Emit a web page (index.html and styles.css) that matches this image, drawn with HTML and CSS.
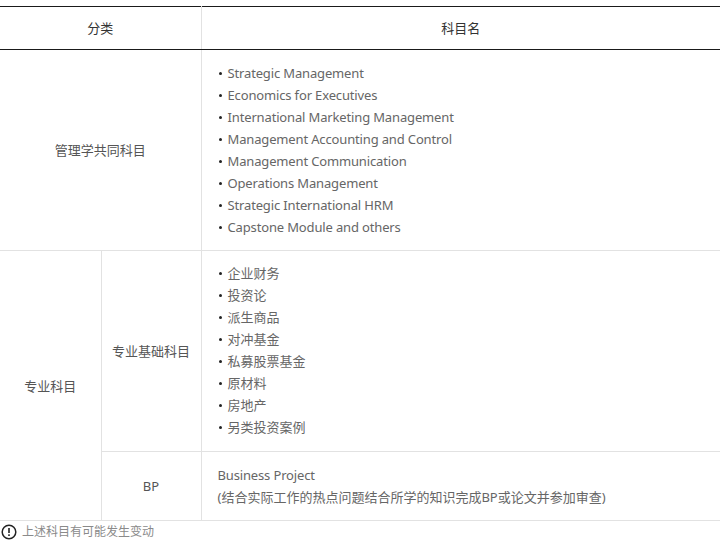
FILE: index.html
```html
<!DOCTYPE html>
<html lang="zh">
<head>
<meta charset="utf-8">
<title>科目</title>
<link rel="stylesheet" href="styles.css">
</head>
<body>
<div class="wrap">
  <table class="curri">
    <colgroup>
      <col class="c1"><col class="c2"><col class="c3">
    </colgroup>
    <thead>
      <tr>
        <th colspan="2" class="div-r">分类</th>
        <th>科目名</th>
      </tr>
    </thead>
    <tbody>
      <tr>
        <td colspan="2" class="cat div-r">管理学共同科目</td>
        <td class="list en">
          <ul>
            <li>Strategic Management</li>
            <li>Economics for Executives</li>
            <li>International Marketing Management</li>
            <li>Management Accounting and Control</li>
            <li>Management Communication</li>
            <li>Operations Management</li>
            <li>Strategic International HRM</li>
            <li>Capstone Module and others</li>
          </ul>
        </td>
      </tr>
      <tr>
        <td rowspan="2" class="cat div-r">专业科目</td>
        <td class="cat div-r">专业基础科目</td>
        <td class="list zh">
          <ul>
            <li>企业财务</li>
            <li>投资论</li>
            <li>派生商品</li>
            <li>对冲基金</li>
            <li>私募股票基金</li>
            <li>原材料</li>
            <li>房地产</li>
            <li>另类投资案例</li>
          </ul>
        </td>
      </tr>
      <tr>
        <td class="cat div-r">BP</td>
        <td class="list plain"><span class="en-line">Business Project</span><br>(结合实际工作的热点问题结合所学的知识完成BP或论文并参加审查)</td>
      </tr>
    </tbody>
  </table>
  <p class="note">
    <svg class="note-ico" width="16" height="16" viewBox="0 0 16 16" aria-hidden="true">
      <circle cx="8" cy="8" r="6.8" fill="none" stroke="#222" stroke-width="1.5"/>
      <rect x="7.2" y="4" width="1.6" height="5" fill="#222"/>
      <rect x="7.2" y="10.3" width="1.6" height="1.7" fill="#222"/>
    </svg>
    <span>上述科目有可能发生变动</span>
  </p>
</div>
</body>
</html>
```

FILE: styles.css
```css
html, body {
  margin: 0;
  padding: 0;
  background: #fff;
}
body {
  font-family: "Noto Sans", "Noto Sans CJK SC", sans-serif;
  font-size: 13px;
  color: #555;
}
.wrap {
  width: 720px;
  padding-top: 6px;
}
.curri {
  width: 720px;
  border-collapse: collapse;
  table-layout: fixed;
  border-top: 1px solid #1a1a1a;
  border-bottom: 1px solid #e2e2e2;
}
.c1 { width: 101px; }
.c2 { width: 100px; }
.c3 { width: 519px; }
.curri th {
  height: 42px;
  padding: 0;
  font-weight: normal;
  color: #333;
  text-align: center;
  vertical-align: middle;
  border-bottom: 1px solid #1a1a1a;
  line-height: 20px;
}
.curri td {
  padding: 0;
  vertical-align: middle;
  border-top: 1px solid #e2e2e2;
}
.curri tbody tr:first-child td {
  border-top: none;
}
.div-r {
  border-right: 1px solid #e2e2e2;
}
.cat {
  text-align: center;
  color: #555;
  line-height: 22px;
}
.list {
  padding: 12px 16px !important;
  line-height: 22px;
  color: #666;
}
.list.en,
.en-line {
  letter-spacing: -0.15px;
}
.list.zh {
  padding: 11px 16px 13px 16px !important;
}
.list ul {
  list-style: none;
  margin: 0;
  padding: 0;
}
.list li {
  display: flex;
  align-items: center;
  gap: 6px;
}
.list li::before {
  content: "";
  width: 3px;
  height: 3px;
  border-radius: 50%;
  background: #222;
  flex: none;
  margin-left: 1px;
}
.note {
  margin: 2px 0 0 0;
  display: flex;
  align-items: center;
  gap: 5px;
  padding-left: 1px;
  font-size: 12px;
  line-height: 18px;
  color: #8a8a8a;
}
.note-ico {
  flex: none;
}
```
